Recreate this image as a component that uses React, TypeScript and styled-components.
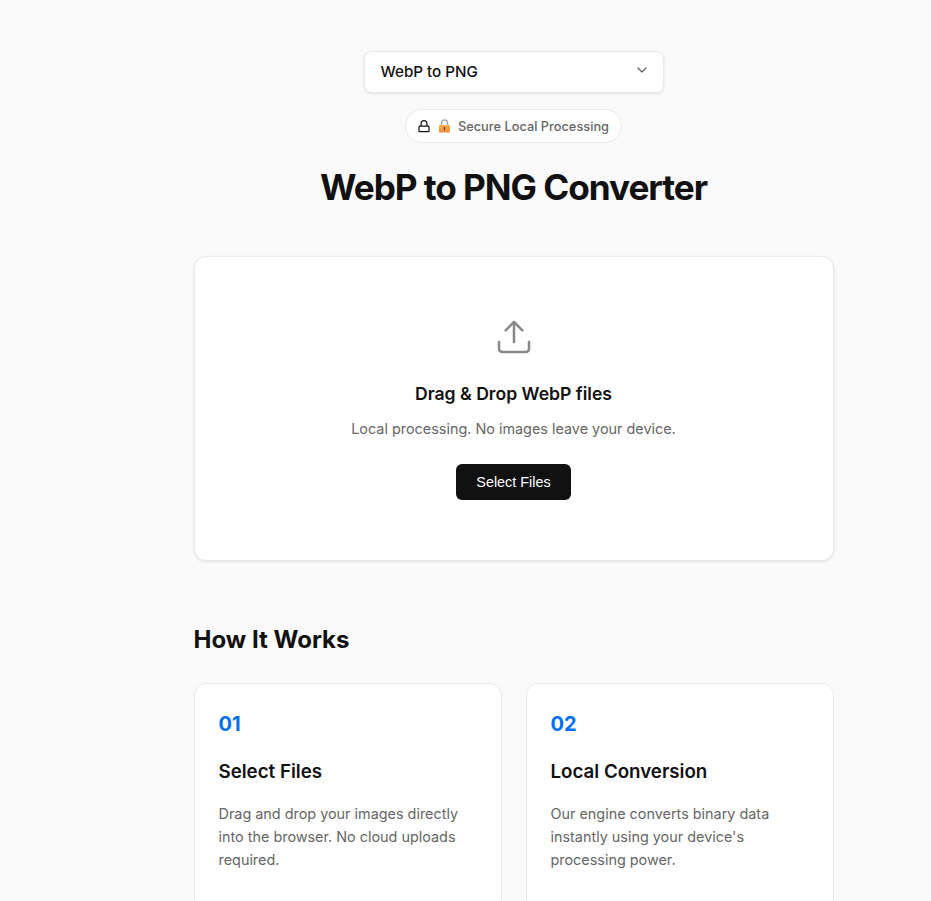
import React from 'react'
import styled, { createGlobalStyle } from 'styled-components'
import { ChevronDown, Upload } from 'lucide-react'

const GlobalStyle = createGlobalStyle`
  html, body {
    margin: 0;
    padding: 0;
    background: #fafafa;
    color: #111111;
    font-family: Inter, "Liberation Sans", sans-serif;
  }
  body {
    overflow: hidden;
    height: 901px;
  }
  * {
    box-sizing: border-box;
  }
`

const Page = styled.main`
  width: 640px;
  margin-left: 193.5px;
  padding-top: 51px;
`

const Header = styled.header`
  display: flex;
  flex-direction: column;
  align-items: center;
`

const Select = styled.div`
  width: 300px;
  height: 42px;
  padding: 0 12.5px 2px 16px;
  display: flex;
  align-items: center;
  justify-content: space-between;
  background: #fff;
  border: 1px solid #eaeaea;
  border-radius: 8px;
  box-shadow: 0 1px 3px rgba(0, 0, 0, 0.1);
  font-size: 15.2px;
  font-weight: 500;
  svg {
    color: #666;
    margin-top: -3px;
  }
`

const Badge = styled.div`
  margin-top: 16px;
  height: 34px;
  padding: 0 12px;
  display: flex;
  align-items: center;
  gap: 7px;
  background: #fff;
  border: 1px solid #eaeaea;
  border-radius: 17px;
  font-size: 12.8px;
  font-weight: 500;
  color: #666;
`

const Title = styled.h1`
  margin: 22px 0 0;
  font-size: 35.2px;
  line-height: 44px;
  font-weight: 700;
  letter-spacing: -0.03em;
  color: #111;
`

const DropZone = styled.section`
  margin-top: 47px;
  height: 305px;
  padding-top: 60px;
  display: flex;
  flex-direction: column;
  align-items: center;
  background: #fff;
  border: 1px solid #eaeaea;
  border-radius: 12px;
  box-shadow: 0 1px 3px rgba(0, 0, 0, 0.1);
  svg {
    color: #888;
  }
`

const DropTitle = styled.h3`
  margin: 23px 0 0;
  font-size: 17.6px;
  line-height: 28px;
  font-weight: 600;
`

const DropText = styled.p`
  margin: 11px 0 0;
  font-size: 14.4px;
  line-height: 20px;
  color: #666;
`

const Button = styled.button`
  margin-top: 25px;
  height: 36px;
  padding: 0 20px;
  background: #111;
  color: #fff;
  border: 0;
  border-radius: 6px;
  font-family: "Liberation Sans", Arial, sans-serif;
  font-size: 14.4px;
`

const SectionTitle = styled.h2`
  margin: 63px 0 0;
  font-size: 24px;
  line-height: 32px;
  font-weight: 700;
`

const Steps = styled.div`
  margin-top: 27px;
  display: grid;
  grid-template-columns: 1fr 1fr;
  gap: 24px;
`

const Step = styled.article`
  height: 260px;
  padding: 26px 24px 24px;
  background: #fff;
  border: 1px solid #eaeaea;
  border-radius: 12px;
`

const StepNumber = styled.div`
  font-size: 20px;
  line-height: 28px;
  font-weight: 700;
  color: #0070f3;
`

const StepTitle = styled.h3`
  margin: 20px 0 0;
  font-size: 18.72px;
  line-height: 28px;
  font-weight: 600;
`

const StepText = styled.p`
  margin: 16px 0 0;
  font-size: 14.4px;
  line-height: 23px;
  color: #666;
`

const steps = [
  {
    number: '01',
    title: 'Select Files',
    text: 'Drag and drop your images directly into the browser. No cloud uploads required.',
  },
  {
    number: '02',
    title: 'Local Conversion',
    text: "Our engine converts binary data instantly using your device's processing power.",
  },
]

const OutlineLock = () => (
  <svg width="13" height="14" viewBox="0 0 13 14" fill="none" stroke="#111" strokeWidth="1.2">
    <rect x="1" y="7.1" width="10" height="5.6" rx="0.8" />
    <path d="M3.1 7V4.6a2.9 2.9 0 0 1 5.8 0V7" />
  </svg>
)

const EmojiLock = () => (
  <svg width="13" height="14" viewBox="0 0 13 14">
    <defs>
      <linearGradient id="lockBody" x1="0" y1="0" x2="0" y2="1">
        <stop offset="0" stopColor="#f8b04a" />
        <stop offset="1" stopColor="#ef8a3a" />
      </linearGradient>
    </defs>
    <path d="M3.5 6.5V4a3 3 0 0 1 6 0v2.5" fill="none" stroke="#a9a4b8" strokeWidth="1.5" />
    <rect x="1" y="6" width="11" height="7.5" rx="1" fill="url(#lockBody)" />
    <circle cx="6.5" cy="9" r="1" fill="#6b4a1e" />
    <rect x="6" y="9" width="1" height="2.5" fill="#6b4a1e" />
  </svg>
)

export default function App() {
  return (
    <>
      <GlobalStyle />
      <Page>
        <Header>
          <Select>
            WebP to PNG
            <ChevronDown size={16} />
          </Select>
          <Badge>
            <OutlineLock />
            <EmojiLock />
            Secure Local Processing
          </Badge>
          <Title>WebP to PNG Converter</Title>
        </Header>
        <DropZone>
          <Upload size={40} strokeWidth={1.5} />
          <DropTitle>Drag &amp; Drop WebP files</DropTitle>
          <DropText>Local processing. No images leave your device.</DropText>
          <Button>Select Files</Button>
        </DropZone>
        <SectionTitle>How It Works</SectionTitle>
        <Steps>
          {steps.map((step) => (
            <Step key={step.number}>
              <StepNumber>{step.number}</StepNumber>
              <StepTitle>{step.title}</StepTitle>
              <StepText>{step.text}</StepText>
            </Step>
          ))}
        </Steps>
      </Page>
    </>
  )
}
